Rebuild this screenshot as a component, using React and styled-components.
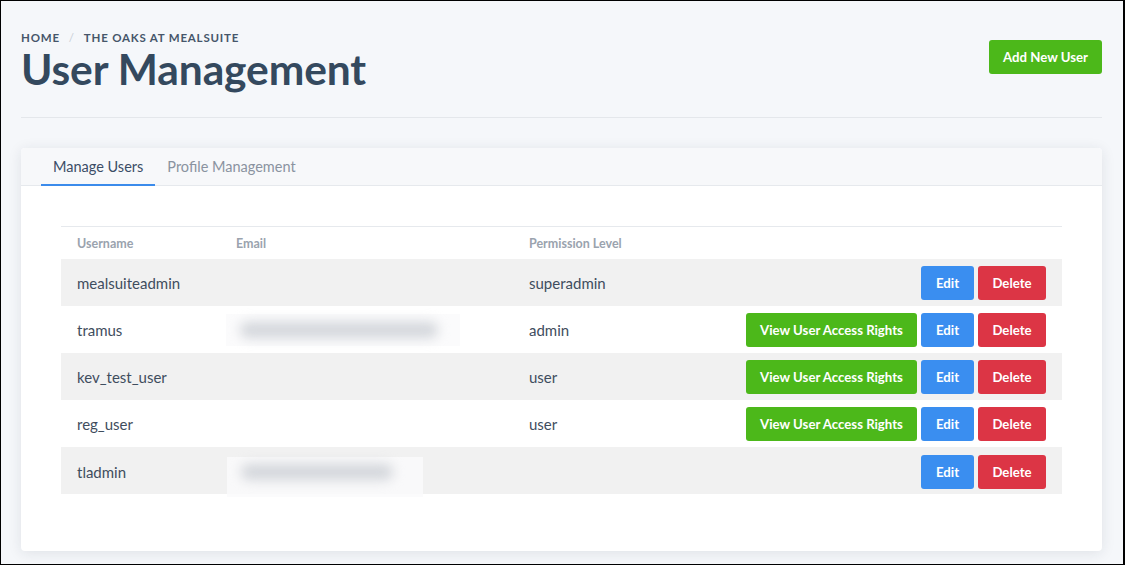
import React from 'react';
import styled, { createGlobalStyle } from 'styled-components';

const GlobalStyle = createGlobalStyle`
  html, body {
    margin: 0;
    padding: 0;
    background: #f5f7fa;
  }
  * {
    box-sizing: border-box;
  }
  body {
    font-family: Lato, "Open Sans", sans-serif;
    color: #3f4d5e;
  }
`;

const Page = styled.div`
  width: 1125px;
  height: 565px;
  border: 1px solid #000;
  border-right-width: 2px;
  background: #f5f7fa;
  padding: 0 21px 0 20px;
  overflow: hidden;
`;

const Header = styled.header`
  display: flex;
  justify-content: space-between;
  align-items: flex-start;
  padding-top: 30px;
  padding-bottom: 24px;
  border-bottom: 1px solid #e4e7eb;
`;

const Breadcrumb = styled.nav`
  display: flex;
  align-items: center;
  gap: 9px;
  font-size: 11.5px;
  font-weight: 700;
  letter-spacing: 0.8px;
  text-transform: uppercase;
  color: #46566a;
  line-height: 14px;
`;

const Sep = styled.span`
  color: #c8ced6;
  font-weight: 400;
`;

const Title = styled.h1`
  margin: 0;
  font-size: 42.5px;
  font-weight: 700;
  color: #34495e;
  line-height: 48px;
  letter-spacing: -0.1px;
`;

const Button = styled.button`
  border: none;
  border-radius: 3px;
  font-family: Lato, "Open Sans", sans-serif;
  font-weight: 700;
  font-size: 13.2px;
  color: #fff;
  height: 34px;
  width: ${p => p.$w}px;
  padding: 0;
  background: ${p =>
    p.$kind === 'green' ? '#4cb81a' : p.$kind === 'blue' ? '#3a8ef0' : '#dc3545'};
  cursor: pointer;
  white-space: nowrap;
`;

const AddButton = styled(Button)`
  margin-top: 9px;
`;

const Card = styled.section`
  margin-top: 30px;
  background: #fff;
  border-radius: 4px;
  box-shadow: 0 2px 14px rgba(30, 40, 60, 0.1);
  height: 403px;
  overflow: hidden;
`;

const TabBar = styled.div`
  display: flex;
  height: 38px;
  padding-left: 20px;
  background: #f7f8fa;
  border-bottom: 1px solid #e6e9ed;
`;

const Tab = styled.div`
  padding: 0 12px;
  display: flex;
  align-items: center;
  font-size: 14.5px;
  color: ${p => (p.$active ? '#3b4d66' : '#8a93a0')};
  border-bottom: 2px solid ${p => (p.$active ? '#3b8beb' : 'transparent')};
  margin-bottom: -1px;
`;

const CardBody = styled.div`
  padding: 40px 40px 0 40px;
`;

const Table = styled.div`
  border-top: 1px solid #e6e9ed;
`;

const Row = styled.div`
  display: grid;
  grid-template-columns: 159px 293px 1fr auto;
  align-items: center;
  height: ${p => (p.$head ? '32px' : '47px')};
  padding: 0 16px;
  background: ${p => (p.$shade ? '#f1f1f1' : '#fff')};
  font-size: ${p => (p.$head ? '12.5px' : '15px')};
  font-weight: ${p => (p.$head ? 700 : 400)};
  color: ${p => (p.$head ? '#9aa3ae' : '#3f4d5e')};
`;

const Actions = styled.div`
  display: flex;
  gap: 4px;
  justify-content: flex-end;
`;

const Blur = styled.div`
  width: ${p => p.$w}px;
  height: ${p => p.$h}px;
  margin-left: ${p => p.$off || 0}px;
  margin-top: ${p => p.$top || 0}px;
  background: rgba(250, 250, 251, 0.85);
  display: flex;
  align-items: center;
  justify-content: flex-start;
  padding: 0 ${p => p.$pad || 20}px 0 14px;
`;

const BlurText = styled.div`
  flex: 1;
  height: 16px;
  margin-top: ${p => p.$shift || 0}px;
  border-radius: 8px;
  background: #d3d6db;
  filter: blur(6px);
`;

const users = [
  { name: 'mealsuiteadmin', email: null, level: 'superadmin', rights: false },
  { name: 'tramus', email: { w: 234, h: 32, off: -10, pad: 22 }, level: 'admin', rights: true },
  { name: 'kev_test_user', email: null, level: 'user', rights: true },
  { name: 'reg_user', email: null, level: 'user', rights: true },
  { name: 'tladmin', email: { w: 196, h: 40, off: -9, top: 10, pad: 30, shift: -10 }, level: '', rights: false },
];

export default function App() {
  return (
    <Page>
      <GlobalStyle />
      <Header>
        <div>
          <Breadcrumb>
            <span>Home</span>
            <Sep>/</Sep>
            <span>The Oaks at MealSuite</span>
          </Breadcrumb>
          <Title>User Management</Title>
        </div>
        <AddButton $kind="green" $w={113}>Add New User</AddButton>
      </Header>
      <Card>
        <TabBar>
          <Tab $active>Manage Users</Tab>
          <Tab>Profile Management</Tab>
        </TabBar>
        <CardBody>
          <Table>
            <Row $head>
              <span>Username</span>
              <span>Email</span>
              <span>Permission Level</span>
              <span />
            </Row>
            {users.map((u, i) => (
              <Row key={u.name} $shade={i % 2 === 0}>
                <span>{u.name}</span>
                <div>
                  {u.email && (
                    <Blur
                      $w={u.email.w}
                      $h={u.email.h}
                      $off={u.email.off}
                      $top={u.email.top}
                      $pad={u.email.pad}
                    >
                      <BlurText $shift={u.email.shift} />
                    </Blur>
                  )}
                </div>
                <span>{u.level}</span>
                <Actions>
                  {u.rights && (
                    <Button $kind="green" $w={171}>
                      View User Access Rights
                    </Button>
                  )}
                  <Button $kind="blue" $w={53}>Edit</Button>
                  <Button $kind="red" $w={68}>Delete</Button>
                </Actions>
              </Row>
            ))}
          </Table>
        </CardBody>
      </Card>
    </Page>
  );
}
